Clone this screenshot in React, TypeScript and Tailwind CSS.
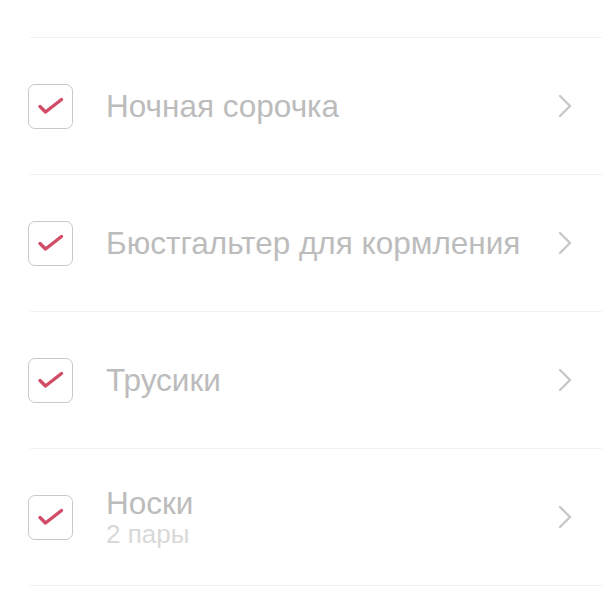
const items = [
  { title: 'Ночная сорочка' },
  { title: 'Бюстгальтер для кормления' },
  { title: 'Трусики' },
  { title: 'Носки', sub: '2 пары' },
];

function Check() {
  return (
    <div className="-ml-[2px] flex h-[45px] w-[45px] shrink-0 items-center justify-center rounded-[7px] border border-[#c9c9c9] bg-white">
      <svg width="28" height="20" viewBox="0 0 28 20" fill="none">
        <path d="M3 10.5 L8.5 16 L24.5 3.5" stroke="#d14c66" strokeWidth="3.4" strokeLinecap="round" strokeLinejoin="round" />
      </svg>
    </div>
  );
}

function Chevron() {
  return (
    <svg width="16" height="26" viewBox="0 0 16 26" fill="none" className="shrink-0">
      <path d="M3 3 L13 13 L3 23" stroke="#c7c7cc" strokeWidth="2.4" strokeLinecap="round" strokeLinejoin="round" />
    </svg>
  );
}

export default function App() {
  return (
    <div className="h-[600px] w-full overflow-hidden bg-white pl-[30px] pt-[37px]" style={{ fontFamily: '"Liberation Sans", Arial, sans-serif' }}>
      {items.map((it) => (
        <div key={it.title} className="flex h-[137px] items-center border-t border-[#f1f1f1] pr-[29px]">
          <Check />
          <div className="ml-[33px] flex-1">
            <div className="text-[31.5px] leading-[34px] text-[#bcbcbc]">{it.title}</div>
            {it.sub && <div className="text-[26px] leading-[28px] text-[#d9d9d9]">{it.sub}</div>}
          </div>
          <Chevron />
        </div>
      ))}
      <div className="border-t border-[#f1f1f1]" />
    </div>
  );
}
